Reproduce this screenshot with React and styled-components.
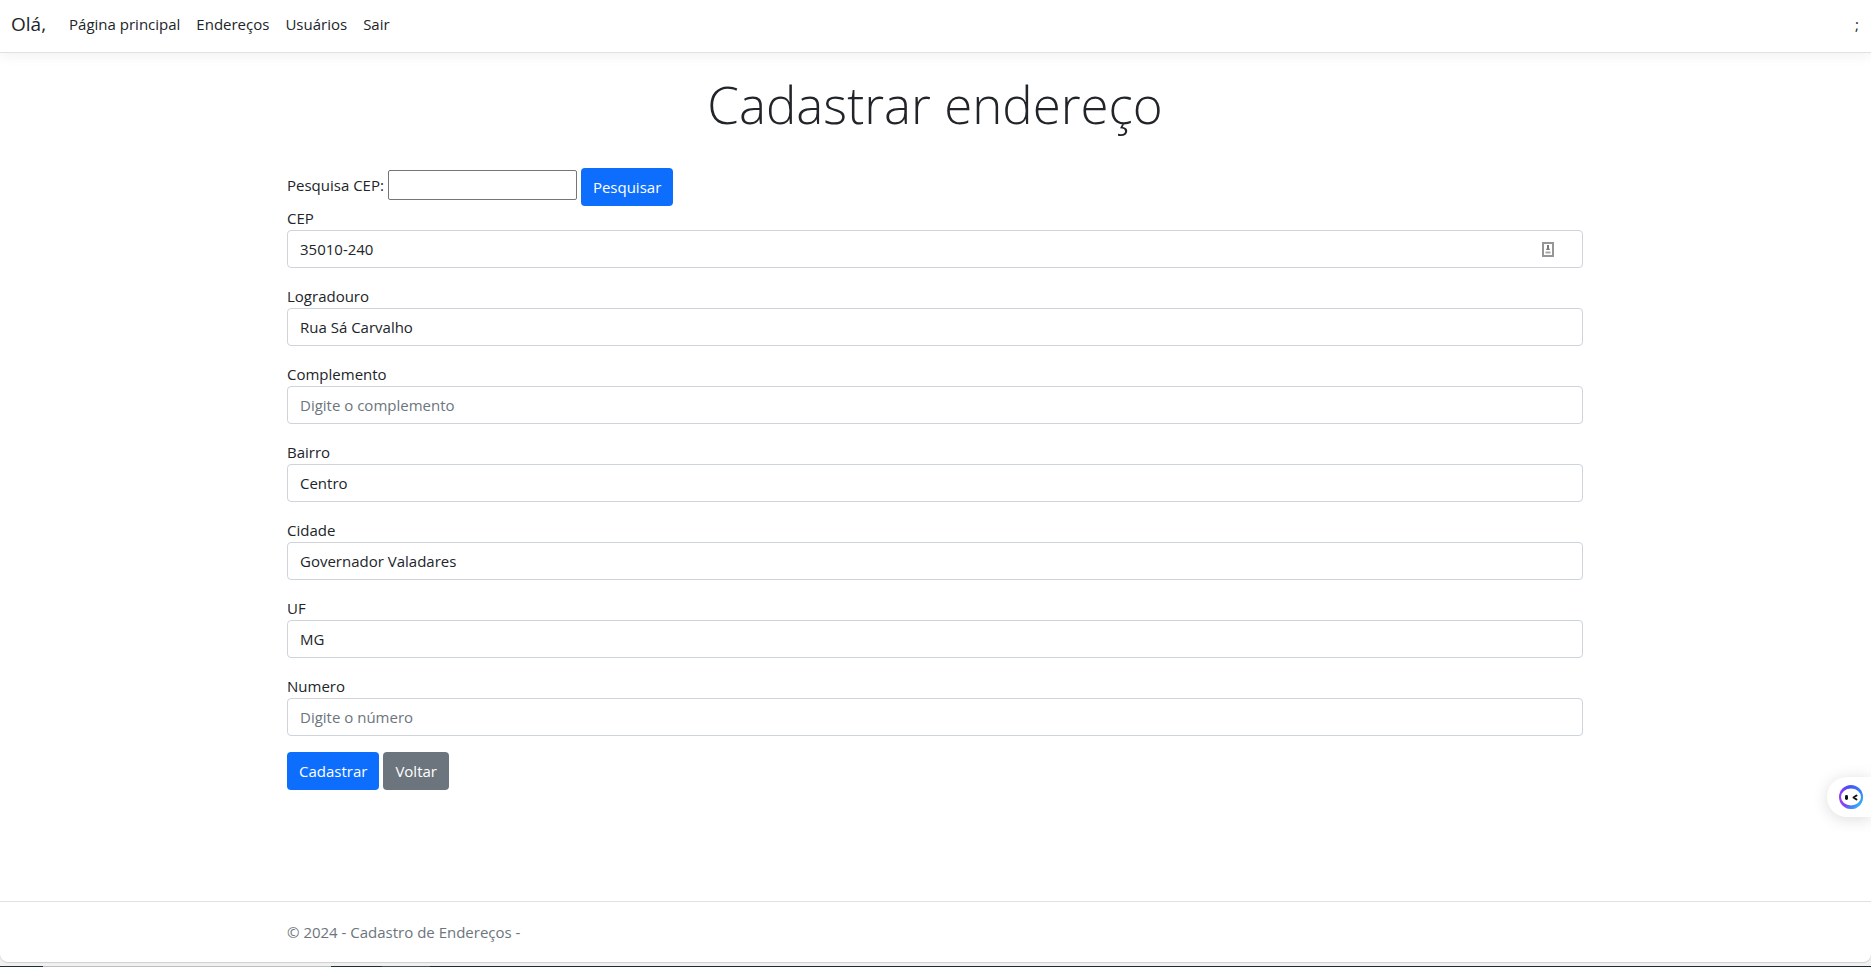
import React from "react";
import styled, { createGlobalStyle } from "styled-components";

const GlobalStyle = createGlobalStyle`
  *, *::before, *::after { box-sizing: border-box; }
  body {
    margin: 0;
    background: #f1f1f1;
    color: #212529;
    font-family: "Segoe UI", "Open Sans", "Noto Sans", sans-serif;
    font-size: 15px;
    line-height: 24px;
  }
  button, input { font: inherit; color: inherit; }
`;

const Shell = styled.div`
  min-height: 100vh;
  display: flex;
  flex-direction: column;
`;

const Page = styled.div`
  flex: 1;
  display: flex;
  flex-direction: column;
  background: #fff;
  border-radius: 0 0 8px 8px;
  box-shadow: 0 1px 1px #cfcfcf;
`;

const DesktopEdge = styled.div`
  height: 1px;
  margin-top: 4px;
  background: linear-gradient(
    to right,
    #17303a 0 43px,
    #bdbfbf 43px 331px,
    #17303a 331px 382px,
    #3f555e 382px 430px,
    #142c3c 430px
  );
`;

const Navbar = styled.header`
  display: flex;
  align-items: center;
  height: 53px;
  padding: 0 12px 4px 11px;
  border-bottom: 1px solid #dee2e6;
  box-shadow: 0 4px 12px rgba(0, 0, 0, 0.05);
`;

const Brand = styled.a`
  margin-right: 15px;
  color: #212529;
  font-size: 19px;
  line-height: 30px;
  text-decoration: none;
`;

const NavList = styled.nav`
  display: flex;
  flex: 1;
`;

const NavLink = styled.a`
  padding: 8px;
  color: #212529;
  text-decoration: none;
`;

const Container = styled.div`
  width: 100%;
  max-width: 1321px;
  margin: 0 auto;
  padding: 0 13px 0 12px;
`;

const Main = styled(Container).attrs({ as: "main" })`
  flex: 1;
  padding-top: 18px;
`;

const Title = styled.h1`
  margin: 0 0 30px;
  font-size: 51px;
  font-weight: 300;
  line-height: 67px;
  text-align: center;
`;

const SearchForm = styled.form`
  display: flex;
  gap: 4px;
`;

const SearchLabel = styled.label`
  padding-top: 5px;
`;

const SearchInput = styled.input`
  width: 189px;
  height: 30px;
  margin-top: 2px;
  padding: 1px 2px;
  border: 1px solid #767676;
  border-radius: 2px;
  background: #fff;
`;

const Button = styled.button`
  height: 38px;
  padding: 0 12px;
  border: 0;
  border-radius: 4px;
  background: ${(p) => (p.$secondary ? "#6c757d" : "#0d6efd")};
  color: #fff;
  cursor: pointer;
`;

const Field = styled.div`
  margin-bottom: 16px;
`;

const Label = styled.label`
  display: block;
`;

const Control = styled.div`
  display: flex;
  align-items: center;
  height: 38px;
  padding-right: 28px;
  border: 1px solid #ced4da;
  border-radius: 4px;
  background: #fff;
`;

const TextInput = styled.input`
  flex: 1;
  min-width: 0;
  height: 36px;
  padding: 0 12px;
  border: 0;
  outline: 0;
  background: transparent;
  &::placeholder { color: #6c757d; opacity: 1; }
`;

const Actions = styled.div`
  display: flex;
  gap: 4px;
`;

const Footer = styled.footer`
  border-top: 1px solid #dee2e6;
  color: #6c757d;
  line-height: 60px;
`;

const AssistantButton = styled.button`
  position: fixed;
  right: 0;
  bottom: 150px;
  width: 44px;
  height: 40px;
  padding: 0 0 0 12px;
  border: 0;
  border-radius: 20px 0 0 20px;
  background: #fff;
  box-shadow: 0 2px 16px rgba(0, 0, 0, 0.14);
  cursor: pointer;
  svg { display: block; }
`;

const ContactIcon = () => (
  <svg width="12" height="16" viewBox="0 0 12 16" aria-hidden="true">
    <rect x="1" y="2" width="10" height="13" fill="#fff" stroke="#969696" strokeWidth="2" />
    <path d="M6 4v3.5" stroke="#757575" strokeWidth="2" />
    <path d="M4 9l1-2h2l1 2z" fill="#777" />
    <path d="M3.5 11.5h5" stroke="#a6a6a6" strokeWidth="2" />
  </svg>
);

const AssistantIcon = () => (
  <svg width="24" height="24" viewBox="0 0 24 24" aria-hidden="true">
    <defs>
      <linearGradient id="ring" x1="0" y1="0.7" x2="1" y2="0.5">
        <stop offset="0" stopColor="#a43cf0" />
        <stop offset="0.5" stopColor="#4b4df5" />
        <stop offset="1" stopColor="#2f86f7" />
      </linearGradient>
      <linearGradient id="glow" x1="0.3" y1="0.4" x2="0.8" y2="1">
        <stop offset="0.4" stopColor="#35b8f5" stopOpacity="0" />
        <stop offset="1" stopColor="#35c4f5" />
      </linearGradient>
    </defs>
    <circle cx="12" cy="12" r="12" fill="url(#ring)" />
    <circle cx="12" cy="12" r="12" fill="url(#glow)" />
    <ellipse cx="12" cy="12" rx="10" ry="8.5" fill="#fff" />
    <rect x="6" y="10" width="3" height="5" rx="1.4" fill="#111" />
    <path d="M17.5 10.5l-3 2 3 2" fill="none" stroke="#111" strokeWidth="2" strokeLinecap="round" strokeLinejoin="round" />
  </svg>
);

const links = ["Página principal", "Endereços", "Usuários", "Sair"];

const fields = [
  { id: "cep", label: "CEP", value: "35010-240", icon: true },
  { id: "logradouro", label: "Logradouro", value: "Rua Sá Carvalho" },
  { id: "complemento", label: "Complemento", placeholder: "Digite o complemento" },
  { id: "bairro", label: "Bairro", value: "Centro" },
  { id: "cidade", label: "Cidade", value: "Governador Valadares" },
  { id: "uf", label: "UF", value: "MG" },
  { id: "numero", label: "Numero", placeholder: "Digite o número" },
];

export default function App() {
  return (
    <Shell>
      <GlobalStyle />
      <Page>
        <Navbar>
          <Brand href="#">Olá,</Brand>
          <NavList>
            {links.map((text) => (
              <NavLink key={text} href="#">{text}</NavLink>
            ))}
          </NavList>
          <span>;</span>
        </Navbar>
        <Main>
          <Title>Cadastrar endereço</Title>
          <SearchForm onSubmit={(e) => e.preventDefault()}>
            <SearchLabel htmlFor="pesquisa">Pesquisa CEP:</SearchLabel>
            <SearchInput id="pesquisa" type="text" />
            <Button type="submit">Pesquisar</Button>
          </SearchForm>
          <form onSubmit={(e) => e.preventDefault()}>
            {fields.map((f) => (
              <Field key={f.id}>
                <Label htmlFor={f.id}>{f.label}</Label>
                <Control>
                  <TextInput id={f.id} type="text" defaultValue={f.value} placeholder={f.placeholder} />
                  {f.icon && <ContactIcon />}
                </Control>
              </Field>
            ))}
            <Actions>
              <Button type="submit">Cadastrar</Button>
              <Button type="button" $secondary>Voltar</Button>
            </Actions>
          </form>
        </Main>
        <Footer>
          <Container>© 2024 - Cadastro de Endereços -</Container>
        </Footer>
      </Page>
      <DesktopEdge />
      <AssistantButton type="button" aria-label="Assistente">
        <AssistantIcon />
      </AssistantButton>
    </Shell>
  );
}
